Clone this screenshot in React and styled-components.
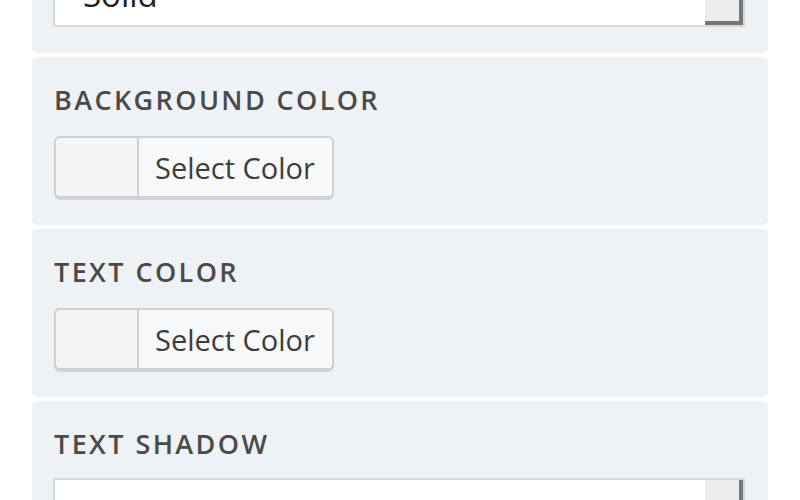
import React from "react";
import styled, { createGlobalStyle } from "styled-components";

const Global = createGlobalStyle`
  html, body { margin: 0; padding: 0; background: #fff; }
  body { font-family: "Open Sans", "Noto Sans", sans-serif; overflow: hidden; }
`;

const Page = styled.div`
  width: 800px;
  height: 500px;
  overflow: hidden;
  background: #fff;
`;

const Stack = styled.div`
  display: flex;
  flex-direction: column;
  gap: 4px;
  padding: 0 32px;
  margin-top: -115px;
`;

const Panel = styled.section`
  box-sizing: border-box;
  height: 168px;
  background: #eff2f5;
  border-radius: 5px;
  padding: 27px 22px 0 22px;
  display: flex;
  flex-direction: column;
`;

const Heading = styled.h3`
  margin: 0 0 ${(p) => p.$gap}px 0;
  font-family: "Open Sans", sans-serif;
  font-weight: 600;
  font-size: 27px;
  line-height: 32px;
  letter-spacing: 2.4px;
  text-transform: uppercase;
  color: #4a4a4a;
  white-space: nowrap;
`;

const ColorButton = styled.button`
  box-sizing: border-box;
  display: flex;
  align-items: stretch;
  width: 280px;
  height: 62px;
  padding: 0;
  border: 2px solid #cfcfcf;
  border-radius: 6px;
  background: #f3f5f7;
  box-shadow: 0 2px 0 #d4d4d4;
  cursor: pointer;
  overflow: hidden;
`;

const Swatch = styled.span`
  width: 81px;
  flex: none;
  background: transparent;
`;

const ButtonText = styled.span`
  flex: 1;
  display: flex;
  align-items: center;
  padding-left: 16px;
  border-left: 2px solid #cfcfcf;
  background: #f7f8f9;
  font-family: "Open Sans", sans-serif;
  font-size: 29px;
  color: #3c3c3c;
  white-space: nowrap;
`;

const Select = styled.div`
  box-sizing: border-box;
  display: flex;
  align-items: stretch;
  width: 692px;
  height: 65px;
  margin-left: -1px;
  border: 2px solid #d8d8d8;
  background: #fff;
`;

const SelectValue = styled.span`
  flex: 1;
  display: flex;
  align-items: center;
  padding-left: 28px;
  font-family: "Open Sans", sans-serif;
  font-size: 33px;
  color: #222;
`;

const SelectArrow = styled.span`
  width: 38px;
  flex: none;
  background: #ededed;
  box-shadow: inset -4px -4px 0 #767676;
`;

const ColorPanel = ({ title }) => (
  <Panel>
    <Heading $gap={20}>{title}</Heading>
    <ColorButton type="button">
      <Swatch />
      <ButtonText>Select Color</ButtonText>
    </ColorButton>
  </Panel>
);

const SelectPanel = ({ title, value }) => (
  <Panel>
    <Heading $gap={18}>{title}</Heading>
    <Select>
      <SelectValue>{value}</SelectValue>
      <SelectArrow />
    </Select>
  </Panel>
);

export default function App() {
  return (
    <Page>
      <Global />
      <Stack>
        <SelectPanel title="Border Style" value="Solid" />
        <ColorPanel title="Background Color" />
        <ColorPanel title="Text Color" />
        <SelectPanel title="Text Shadow" value="" />
      </Stack>
    </Page>
  );
}
